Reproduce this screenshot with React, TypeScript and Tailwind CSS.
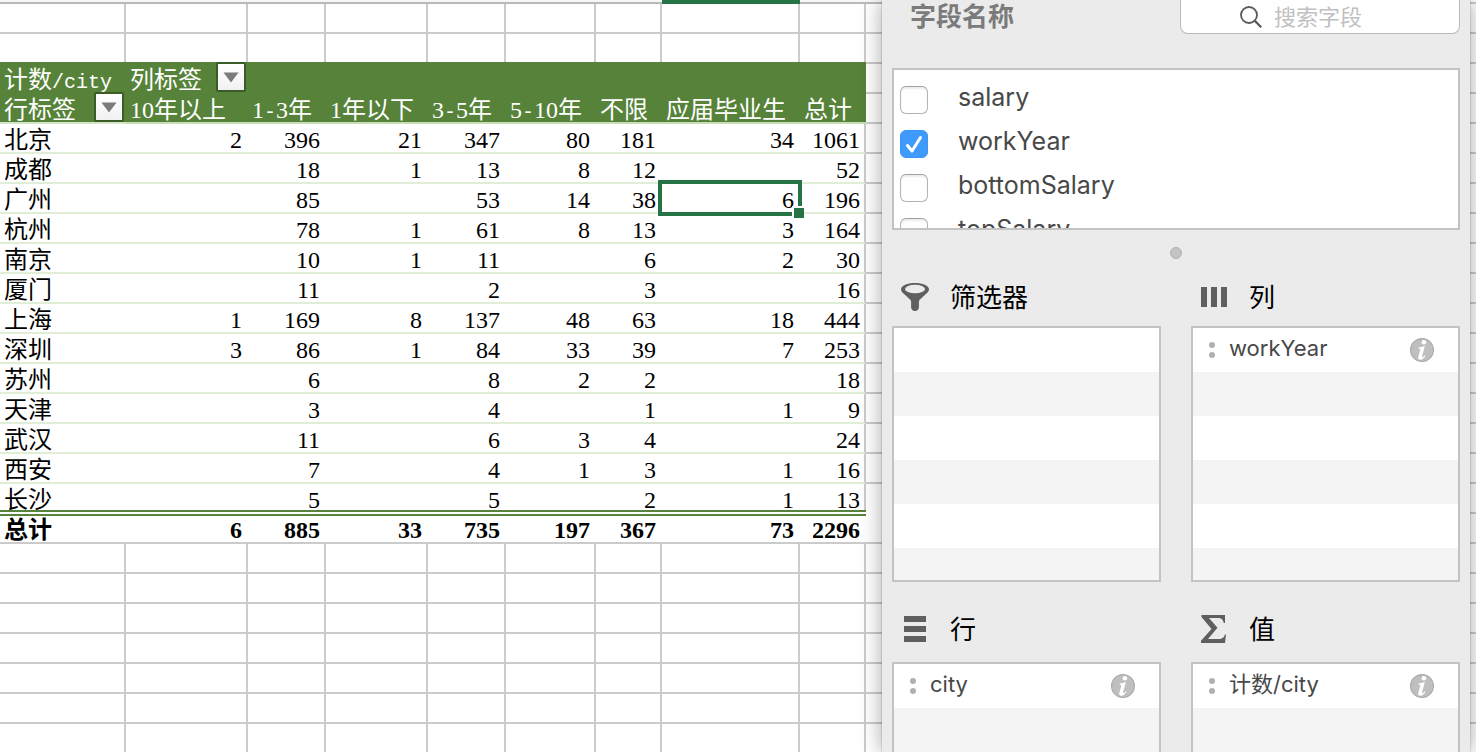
import { useState } from 'react'
import type { ReactNode } from 'react'
import clsx from 'clsx'

const COLUMNS = ['10年以上', '1-3年', '1年以下', '3-5年', '5-10年', '不限', '应届毕业生', '总计']

type Cell = number | null

const ROWS: { city: string; values: Cell[] }[] = [
  { city: '北京', values: [2, 396, 21, 347, 80, 181, 34, 1061] },
  { city: '成都', values: [null, 18, 1, 13, 8, 12, null, 52] },
  { city: '广州', values: [null, 85, null, 53, 14, 38, 6, 196] },
  { city: '杭州', values: [null, 78, 1, 61, 8, 13, 3, 164] },
  { city: '南京', values: [null, 10, 1, 11, null, 6, 2, 30] },
  { city: '厦门', values: [null, 11, null, 2, null, 3, null, 16] },
  { city: '上海', values: [1, 169, 8, 137, 48, 63, 18, 444] },
  { city: '深圳', values: [3, 86, 1, 84, 33, 39, 7, 253] },
  { city: '苏州', values: [null, 6, null, 8, 2, 2, null, 18] },
  { city: '天津', values: [null, 3, null, 4, null, 1, 1, 9] },
  { city: '武汉', values: [null, 11, null, 6, 3, 4, null, 24] },
  { city: '西安', values: [null, 7, null, 4, 1, 3, 1, 16] },
  { city: '长沙', values: [null, 5, null, 5, null, 2, 1, 13] },
]

const TOTALS = [6, 885, 33, 735, 197, 367, 73, 2296]

const SELECTED = { city: '广州', column: 6 }
const SELECTED_COLUMN = SELECTED.column + 1

const FIELDS = ['salary', 'workYear', 'bottomSalary', 'topSalary']

const MONO = "font-['Liberation_Mono',monospace] text-xl leading-none"

function FilterButton({ label }: { label: string }) {
  return (
    <button
      type="button"
      aria-label={label}
      className="mr-0.5 flex size-[30px] shrink-0 items-center justify-center rounded-xs border-2 border-[#3b5c26] bg-linear-to-b from-white to-[#f1f1f1]"
    >
      <svg width="16" height="11" viewBox="0 0 16 11">
        <path d="M0.5 0.5h15L8 10.5z" fill="#7b7b7b" />
      </svg>
    </button>
  )
}

// The hyphen takes a full half-width cell, as the digits do
function RangeLabel({ text }: { text: string }) {
  const [from, to] = text.split('-')
  if (!to) return <>{text}</>
  return (
    <>
      {from}
      <span className={MONO}>-</span>
      {to}
    </>
  )
}

function BlankRow({ bordered = true }: { bordered?: boolean }) {
  return (
    <tr className={bordered ? 'h-[30px]' : 'h-7'}>
      {Array.from({ length: 10 }, (_, i) => (
        <td
          key={i}
          className={clsx('border-[#cbcbcb] p-0', i < 9 && 'border-r-2', bordered && 'border-b-2')}
        />
      ))}
    </tr>
  )
}

function PivotTable() {
  return (
    <table className="w-full table-fixed border-separate border-spacing-0 font-['Liberation_Serif','Noto_Sans_CJK_SC',serif] text-2xl leading-5 font-normal whitespace-nowrap text-black">
      <colgroup>
        <col className="w-[126px]" />
        <col className="w-[122px]" />
        <col className="w-[78px]" />
        <col className="w-[102px]" />
        <col className="w-[78px]" />
        <col className="w-[90px]" />
        <col className="w-[66px]" />
        <col className="w-[138px]" />
        <col className="w-[66px]" />
        <col />
      </colgroup>
      <thead>
        <tr className="h-1">
          {Array.from({ length: 10 }, (_, i) => (
            <td
              key={i}
              className={clsx(
                'border-b-2 p-0',
                i === SELECTED_COLUMN
                  ? 'border-[#267346] bg-[#267346]'
                  : 'border-[#b9b9b9] bg-[#f7f7f7]',
              )}
            />
          ))}
        </tr>
        <BlankRow />
        <BlankRow bordered={false} />
        <tr className="h-[30px] bg-[#568239] text-white">
          <th scope="col" className="p-0 pl-1 text-left align-top font-normal">
            <div className="h-[30px] pt-2">
              计数<span className={MONO}>/city</span>
            </div>
          </th>
          <th scope="col" className="p-0 pl-1 text-left align-top font-normal">
            <div className="flex h-[30px] justify-between">
              <span className="pt-2">列标签</span>
              <FilterButton label="筛选列标签" />
            </div>
          </th>
          <td colSpan={7} className="p-0" />
          <td className="border-t-2 border-[#cbcbcb] bg-white p-0" />
        </tr>
        <tr className="h-8 bg-[#568239] text-white">
          <th
            scope="col"
            className="border-b-2 border-[#d3e6c6] p-0 pl-1 text-left align-top font-normal"
          >
            <div className="flex h-[30px] justify-between">
              <span className="pt-2">行标签</span>
              <FilterButton label="筛选行标签" />
            </div>
          </th>
          {COLUMNS.map((column) => (
            <th
              key={column}
              scope="col"
              className="border-b-2 border-[#c6dfb4] p-0 pl-1 text-left align-top font-normal"
            >
              <div className="h-[30px] pt-2">
                <RangeLabel text={column} />
              </div>
            </th>
          ))}
          <td className="border-y-2 border-[#cbcbcb] bg-white p-0" />
        </tr>
      </thead>
      <tbody>
        {ROWS.map(({ city, values }, r) => {
          const last = r === ROWS.length - 1
          const edge = last ? 'pb-0' : 'border-b-2 pb-0.5'
          return (
            <tr key={city}>
              <th
                scope="row"
                className={clsx('border-[#e0eed8] p-0 pt-1.5 pl-1 text-left font-normal', edge)}
              >
                {city}
              </th>
              {values.map((value, i) => (
                <td
                  key={i}
                  className={clsx(
                    'relative border-b-[#e0eed8] p-0 pt-1.5 text-right',
                    edge,
                    i === 7 ? 'border-r-2 border-r-[#cbcbcb] pr-1' : 'pr-1.5',
                  )}
                >
                  {value}
                  {city === SELECTED.city && i === SELECTED.column && (
                    <span className="absolute -top-1 -right-0.5 -bottom-1 -left-1 z-10 border-4 border-[#267346]">
                      <span className="absolute -right-1.5 -bottom-1.5 box-content size-2.5 border-t-2 border-l-2 border-white bg-[#267346]" />
                    </span>
                  )}
                </td>
              ))}
              <td className={clsx('border-[#cbcbcb] p-0', edge)} />
            </tr>
          )
        })}
      </tbody>
      <tfoot>
        <tr className="font-bold">
          <th
            scope="row"
            className="border-t-6 border-b-2 border-t-[#568239] border-b-[#cbcbcb] p-0 pt-1 pb-0.5 pl-1 text-left font-bold [border-top-style:double]"
          >
            总计
          </th>
          {TOTALS.map((value, i) => (
            <td
              key={i}
              className="border-t-6 border-b-2 border-t-[#568239] border-b-[#cbcbcb] p-0 pt-1 pr-1.5 pb-0.5 text-right [border-top-style:double]"
            >
              {value}
            </td>
          ))}
          <td className="border-b-2 border-[#cbcbcb] p-0" />
        </tr>
        {Array.from({ length: 7 }, (_, i) => (
          <BlankRow key={i} />
        ))}
      </tfoot>
    </table>
  )
}

function SearchIcon() {
  return (
    <svg width="22" height="22" viewBox="0 0 22 22" fill="none" stroke="#5a5a5a" strokeWidth="1.8">
      <circle cx="9" cy="9" r="8" />
      <path d="M14.6 14.6l6.6 6.6" strokeWidth="2.2" />
    </svg>
  )
}

function FunnelIcon() {
  return (
    <svg width="28" height="28" viewBox="0 0 28 28">
      <path
        d="M14 0C6.300 0 0 2.600 0 6.200c0 2 1.500 3.600 3.600 5.200L9 16.400c.8.8 1.100 1.500 1.100 2.600v5.300c0 2.200 1.700 3.700 3.900 3.700s3.900-1.500 3.900-3.700V19c0-1.100.3-1.800 1.100-2.600l5.400-5C26.500 9.800 28 8.200 28 6.200 28 2.600 21.700 0 14 0z"
        fill="#5f5f5f"
      />
      <ellipse cx="14" cy="6" rx="10" ry="4.300" fill="#ebebeb" />
    </svg>
  )
}

function ColumnsIcon() {
  return (
    <svg width="26" height="20" viewBox="0 0 26 20" fill="#5f5f5f">
      <path d="M0 0h6v20H0zM10 0h6v20h-6zM20 0h6v20h-6z" />
    </svg>
  )
}

function RowsIcon() {
  return (
    <svg width="22" height="26" viewBox="0 0 22 26" fill="#5f5f5f">
      <path d="M0 0h22v6H0zM0 10h22v6H0zM0 20h22v6H0z" />
    </svg>
  )
}

function SumIcon() {
  return (
    <svg width="26" height="28" viewBox="0 0 26 28" fill="#5f5f5f">
      <path d="M0.500 0H24v8h-1.200C22 4.500 20.500 3 17 3H8l8.500 9.800L7 24h10.500c4 0 5.500-1.600 6.500-4.500h1L24 28H0v-2.200L10.500 14 0.500 2z" />
    </svg>
  )
}

function InfoIcon() {
  return (
    <svg width="24" height="24" viewBox="0 0 24 24">
      <circle cx="12" cy="12" r="11.400" fill="#bfbfbf" stroke="#ababab" strokeWidth="1.200" />
      <circle cx="13.900" cy="4.200" r="2.300" fill="#fff" />
      <path
        d="M8.800 9.500c1.800-.2 3.400-.7 5.200-1.300h.8l-2.600 9.600c-.2.800 0 1.300.4 1.300.6 0 1.300-.8 2-1.800l.8.500c-1.300 2.300-2.800 4-5 4-1.800 0-2.600-1.200-2.100-3l1.800-6.600c.3-1.200 0-1.600-1.500-1.700z"
        fill="#fff"
      />
    </svg>
  )
}

function FieldList() {
  const [checked, setChecked] = useState(new Set(['workYear']))

  const toggle = (field: string) => {
    const next = new Set(checked)
    if (next.has(field)) next.delete(field)
    else next.add(field)
    setChecked(next)
  }

  return (
    <div className="mt-[34px] h-[162px] shrink-0 overflow-hidden border-2 border-[#c3c3c3] bg-white pt-2">
      {FIELDS.map((field) => (
        <label key={field} className="flex h-11 items-center gap-[30px] pl-1.5 text-[25px]">
          <span className="relative size-7 shrink-0">
            <input
              type="checkbox"
              checked={checked.has(field)}
              onChange={() => toggle(field)}
              className="peer block size-7 appearance-none rounded-md border border-[#b4b4b4] border-t-[#a0a0a0] bg-white shadow-[inset_0_2px_2px_#ececec] checked:border-[#3b93f5] checked:bg-[#3f9bfb] checked:shadow-none"
            />
            <svg
              viewBox="0 0 28 28"
              fill="none"
              className="pointer-events-none absolute inset-0 hidden peer-checked:block"
            >
              <path
                d="M7.500 15.500l4.500 5.500L20.500 7.500"
                stroke="#fff"
                strokeWidth="3"
                strokeLinecap="round"
                strokeLinejoin="round"
              />
            </svg>
          </span>
          <span className="pb-1.5 leading-8">{field}</span>
        </label>
      ))}
    </div>
  )
}

function DropZone({
  title,
  icon,
  item,
  rows,
  className,
  listClassName,
}: {
  title: string
  icon: ReactNode
  item?: string
  rows: number
  className: string
  listClassName: string
}) {
  return (
    <section className={clsx('flex min-w-0 flex-col', className)}>
      <h3 className="flex h-[42px] shrink-0 items-center gap-2 pl-2 text-[26px] leading-8 text-black">
        <span className="flex w-[42px] shrink-0 items-center">
          <span className="flex w-[30px] justify-center">{icon}</span>
        </span>
        <span className="pt-0.5">{title}</span>
      </h3>
      <ul className={clsx('overflow-hidden border-2 border-[#c3c3c3]', listClassName)}>
        {Array.from({ length: rows }, (_, i) => (
          <li key={i} className="flex h-11 items-center bg-white pr-6 pl-4 text-[22px] even:bg-[#f4f4f4]">
            {i === 0 && item && (
              <>
                <span className="mr-3.5 flex flex-col gap-1">
                  <span className="size-1.5 rounded-full bg-[#b0b0b0]" />
                  <span className="size-1.5 rounded-full bg-[#b0b0b0]" />
                </span>
                <span className="grow pb-1 leading-7">{item}</span>
                <button type="button" aria-label={`${item} 设置`}>
                  <InfoIcon />
                </button>
              </>
            )}
          </li>
        ))}
      </ul>
    </section>
  )
}

function FieldPanel() {
  return (
    <aside className="relative z-20 flex w-[588px] shrink-0 flex-col overflow-hidden bg-[#ebebeb] px-2.5 font-['Inter','Noto_Sans_CJK_SC',sans-serif] text-[#484848]">
      <header className="flex h-[34px] shrink-0 items-center justify-between pl-[18px]">
        <h2 className="text-[26px] leading-8 font-bold text-[#7b7b7b]">字段名称</h2>
        <label className="flex h-full w-[280px] items-center justify-center gap-3 rounded-b-lg border border-t-0 border-[#b9b9b9] bg-white pr-9">
          <SearchIcon />
          <input
            type="text"
            aria-label="搜索字段"
            placeholder="搜索字段"
            className="w-[90px] text-[22px] leading-7 outline-none placeholder:text-[#c0c0c0]"
          />
        </label>
      </header>
      <FieldList />
      <div className="flex h-[46px] shrink-0 items-center justify-center">
        <span className="size-3 rounded-full border border-[#b0b0b0] bg-[#c3c3c3]" />
      </div>
      <div className="grid shrink-0 grid-cols-2 gap-[30px]">
        <DropZone
          title="筛选器"
          icon={<FunnelIcon />}
          rows={6}
          className="gap-2"
          listClassName="h-64"
        />
        <DropZone
          title="列"
          icon={<ColumnsIcon />}
          item="workYear"
          rows={6}
          className="gap-2"
          listClassName="h-64"
        />
      </div>
      <div className="mt-[26px] grid grow grid-cols-2 gap-[30px]">
        <DropZone
          title="行"
          icon={<RowsIcon />}
          item="city"
          rows={2}
          className="gap-3"
          listClassName="grow border-b-0"
        />
        <DropZone
          title="值"
          icon={<SumIcon />}
          item="计数/city"
          rows={2}
          className="gap-3"
          listClassName="grow border-b-0"
        />
      </div>
    </aside>
  )
}

export default function App() {
  return (
    <div className="flex h-screen overflow-hidden bg-white">
      <main className="min-w-0 grow overflow-hidden">
        <PivotTable />
      </main>
      <div className="relative z-20 flex shrink-0 shadow-[0_0_20px_rgba(0,0,0,0.35),0_0_1px_rgba(0,0,0,0.5)]">
        <FieldPanel />
      </div>
      <div className="w-1.5 shrink-0 bg-[repeating-linear-gradient(to_bottom,#fff_0px,#fff_2px,#cbcbcb_2px,#cbcbcb_4px,#fff_4px,#fff_30px)]" />
    </div>
  )
}
